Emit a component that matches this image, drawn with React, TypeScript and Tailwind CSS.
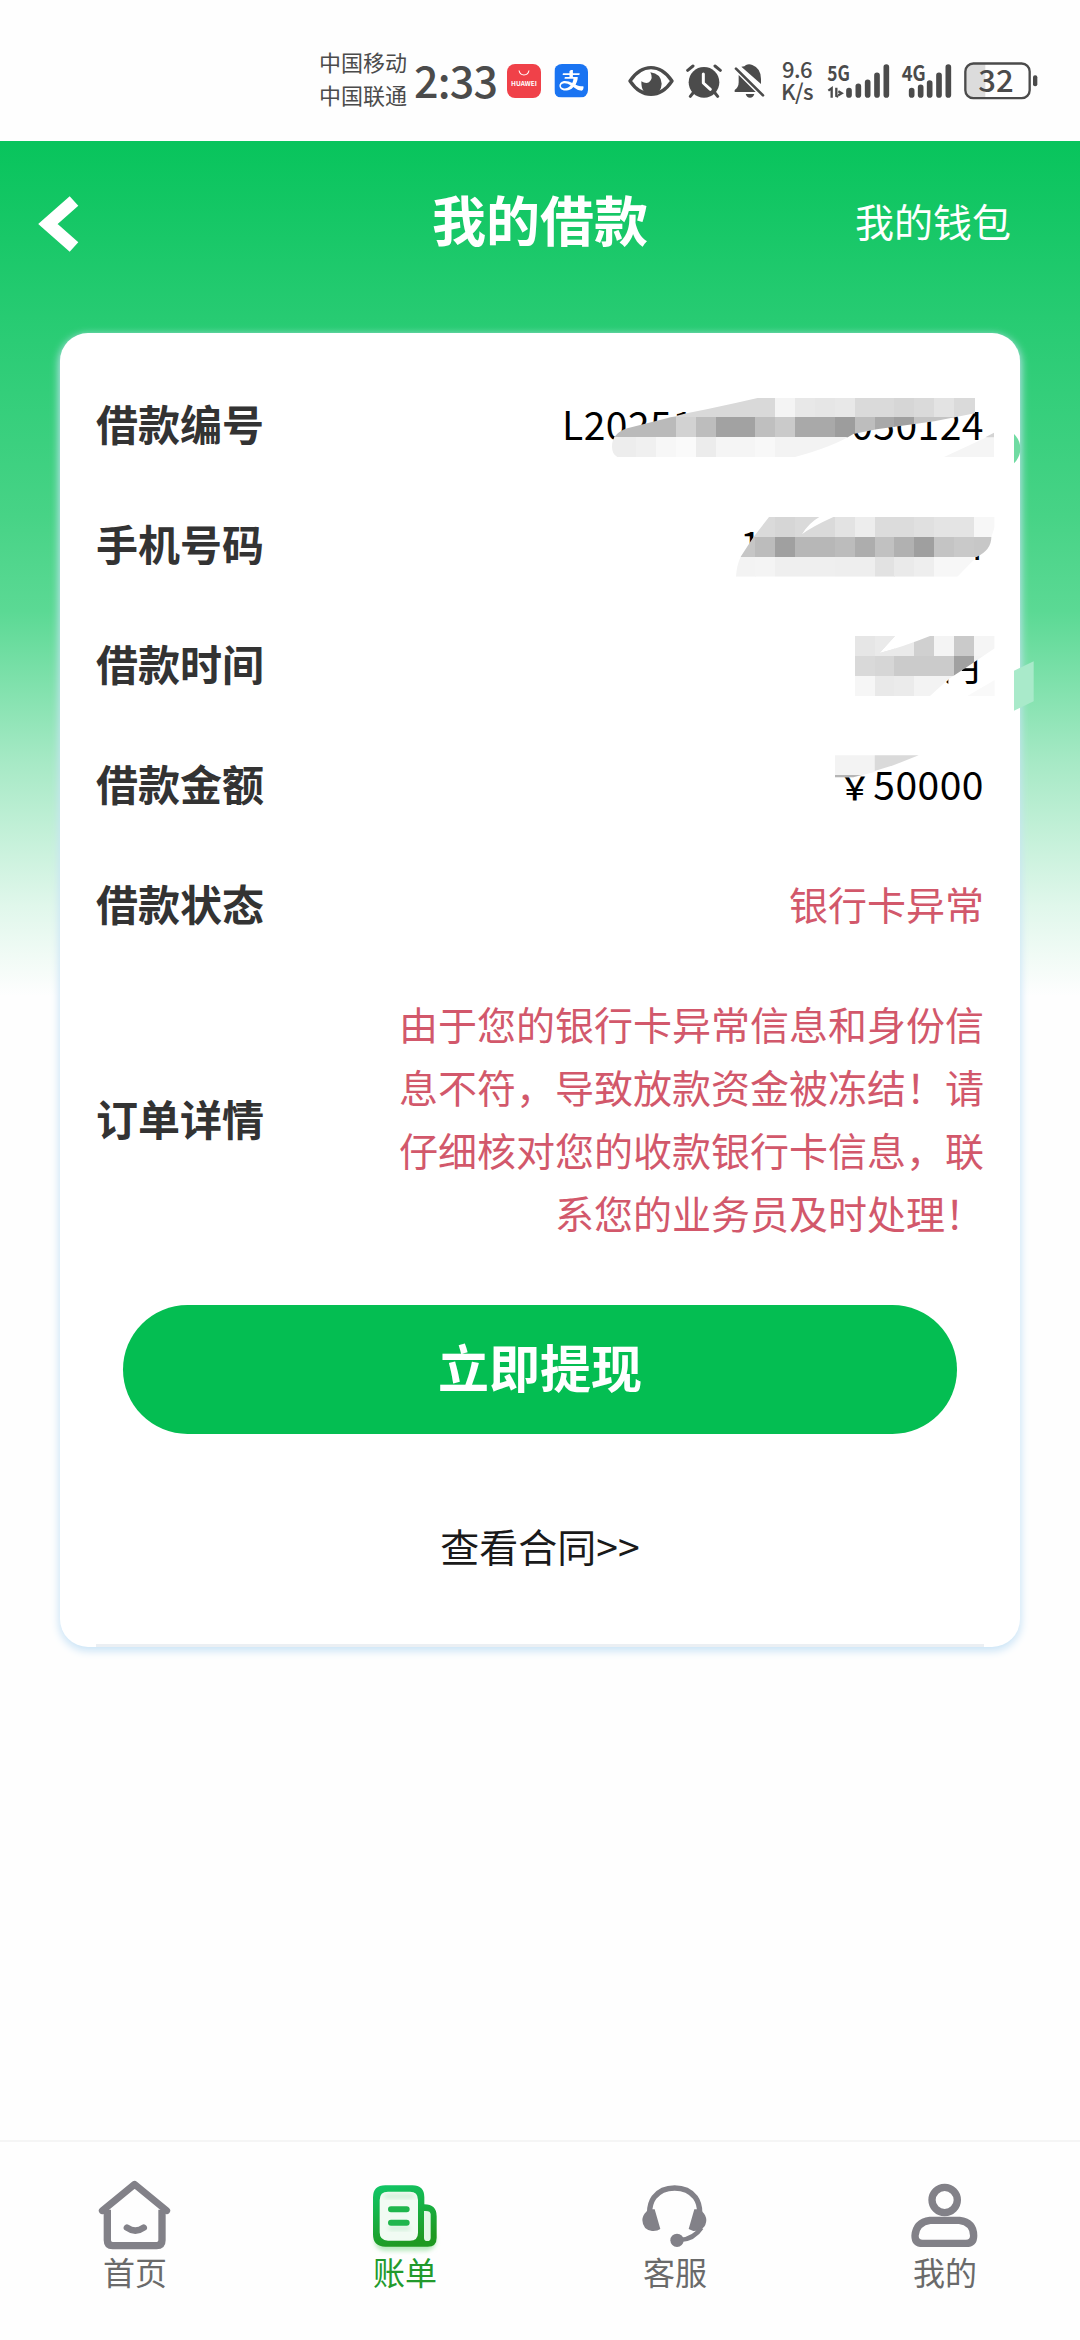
import type { ReactNode } from 'react'
import { AiFillAlipaySquare } from 'react-icons/ai'

type Tab = {
  label: string
  icon: ReactNode
  active?: boolean
}

const INK = '#4b4b4b'
const GREY = '#828188'

// x, y, width, height, fill
type Block = [number, number, number, number, string]

function Blocks({ items }: { items: Block[] }) {
  return (
    <>
      {items.map(([x, y, w, h, fill], i) => (
        <rect key={i} x={x} y={y} width={w} height={h} fill={fill} />
      ))}
    </>
  )
}

const orderBlocks: Block[] = [
  [210, 203, 496, 60, '#d9d9d9'],
  [705, 203, 60, 60, '#f4f4f4'],
  [765, 203, 181, 60, '#e8e8e8'],
  [825, 203, 60, 60, '#e6e6e6'],
  [945, 203, 120, 60, '#dadada'],
  [1063, 203, 60, 60, '#d6d6d6'],
  [1122, 203, 61, 60, '#dadada'],
  [1183, 203, 60, 60, '#e3e3e3'],
  [1243, 203, 62, 60, '#dadada'],
  [210, 262, 198, 61, '#bababa'],
  [408, 262, 60, 61, '#d2d2d2'],
  [467, 262, 60, 61, '#bdbdbd'],
  [527, 262, 120, 61, '#a2a2a2'],
  [646, 262, 60, 61, '#bfbfbf'],
  [705, 262, 60, 61, '#cacaca'],
  [765, 262, 120, 61, '#a9a9a9'],
  [885, 262, 60, 61, '#9d9d9d'],
  [945, 262, 60, 61, '#bdbdbd'],
  [1004, 262, 60, 61, '#a9a9a9'],
  [1063, 262, 60, 61, '#a0a0a0'],
  [1122, 262, 183, 61, '#c4c4c4'],
  [210, 322, 80, 60, '#ededed'],
  [289, 322, 60, 60, '#f0f0f0'],
  [348, 322, 60, 60, '#f7f7f7'],
  [408, 322, 60, 60, '#fafafa'],
  [467, 322, 60, 60, '#ececec'],
  [527, 322, 120, 60, '#f5f5f5'],
  [646, 322, 60, 60, '#f8f8f8'],
  [705, 322, 240, 60, '#f3f3f3'],
]

const phoneBlocks: Block[] = [
  [580, 561, 126, 60, '#dadada'],
  [705, 561, 60, 60, '#d6d6d6'],
  [765, 561, 60, 60, '#dadada'],
  [825, 561, 60, 60, '#dadada'],
  [885, 561, 60, 60, '#e3e3e3'],
  [945, 561, 60, 60, '#ededed'],
  [1004, 561, 119, 60, '#dcdcdc'],
  [1122, 561, 61, 60, '#e0e0e0'],
  [1183, 561, 120, 60, '#e4e4e4'],
  [1302, 561, 62, 60, '#f7f7f7'],
  [580, 620, 67, 61, '#c6c6c6'],
  [646, 620, 60, 61, '#bcbcbc'],
  [705, 620, 61, 61, '#a0a0a0'],
  [765, 620, 120, 61, '#b7b7b7'],
  [885, 620, 60, 61, '#bcbcbc'],
  [945, 620, 60, 61, '#adadad'],
  [1004, 620, 60, 61, '#c1c1c1'],
  [1063, 620, 60, 61, '#b1b1b1'],
  [1122, 620, 61, 61, '#9f9f9f'],
  [1183, 620, 60, 61, '#c4c4c4'],
  [1243, 620, 60, 61, '#c9c9c9'],
  [1302, 620, 62, 61, '#c7c7c7'],
  [580, 680, 67, 60, '#f3f3f3'],
  [646, 680, 60, 60, '#f4f4f4'],
  [705, 680, 180, 60, '#efefef'],
  [885, 680, 120, 60, '#eeeeee'],
  [1004, 680, 60, 60, '#e2e2e2'],
  [1063, 680, 60, 60, '#eaeaea'],
  [1122, 680, 61, 60, '#eeeeee'],
  [1183, 680, 120, 60, '#f7f7f7'],
]

const termBlocks: Block[] = [
  [945, 918, 120, 60, '#e6e6e6'],
  [1004, 918, 120, 60, '#eaeaea'],
  [1122, 918, 61, 60, '#d0d0d0'],
  [1183, 918, 60, 60, '#f4f4f4'],
  [1243, 918, 60, 60, '#cacaca'],
  [1302, 918, 62, 60, '#f5f5f5'],
  [945, 977, 60, 61, '#d9d9d9'],
  [1004, 977, 60, 61, '#d6d6d6'],
  [1063, 977, 180, 61, '#cbcbcb'],
  [1243, 977, 60, 61, '#a1a1a1'],
  [1302, 977, 62, 61, '#f3f3f3'],
  [945, 1037, 60, 61, '#f6f6f6'],
  [1004, 1037, 60, 61, '#e9e9e9'],
  [1063, 1037, 60, 61, '#ebebeb'],
  [1122, 1037, 121, 61, '#f3f3f3'],
]

/* Hand-brushed mosaic that hides the private values */
function Mosaic() {
  return (
    <svg
      className="pointer-events-none absolute left-[540px] top-[189px]"
      width="520"
      height="510"
      viewBox="0 0 1560 1530"
    >
      <defs>
        <clipPath id="order">
          <path d="M216 350C216 322 232 305 262 295L440 250L500 238L590 218L656 203H1305V250L1183 274L1010 298L940 312Q880 350 765 381H232Q216 372 216 350Z" />
        </clipPath>
        <clipPath id="phone">
          <path d="M687 561H838Q805 580 786 613Q812 592 880 561H1364V590L1354 622Q1354 660 1310 681L1252 740H588Q590 705 603 679L640 622Z" />
        </clipPath>
        <clipPath id="term">
          <path d="M945 918H1065L1019 969Q1090 950 1170 918H1364V955L1300 998L1225 1048L1170 1098H945Z" />
        </clipPath>
      </defs>
      {/* white strokes of the brush, under the grey blocks */}
      <path d="M1170 1098L1225 1062V1010L1266 1014L1262 1062L1225 1098Z" fill="#fff" />
      <g shapeRendering="crispEdges">
        <g clipPath="url(#order)">
          <Blocks items={orderBlocks} />
        </g>
        <g clipPath="url(#phone)">
          <Blocks items={phoneBlocks} />
        </g>
        <g clipPath="url(#term)">
          <Blocks items={termBlocks} />
        </g>
      </g>
      <path d="M1212 381L1340 322H1362V381Z" fill="#f5f5f5" />
      <path d="M1336 322L1362 308V322Z" fill="#d4d4d4" />
      <path d="M1282 1098L1364 1050V1098Z" fill="#f9f9f9" />
      <path d="M885 1276H1004V1326L940 1342H885Z" fill="#f3f3f3" />
      <path d="M885 1335H965L940 1342H885Z" fill="#b5b5b5" />
      <path d="M1004 1276H1136L1060 1306L1004 1323Z" fill="#dadada" />
      <path d="M1422 312Q1441 330 1441 356Q1441 380 1422 400Z" fill="#70dba2" />
      <path d="M1422 1022L1481 994V1114L1422 1142Z" fill="#a9eaca" />
    </svg>
  )
}

function StatusBar() {
  return (
    <div className="flex h-[141px] items-center pt-[20px] text-[#4b4b4b]">
      <div className="ml-[319px] w-[88px] pb-[5px] text-[22px] leading-[33px] whitespace-nowrap">
        <div>中国移动</div>
        <div>中国联通</div>
      </div>
      <div className="ml-[7px] w-[86px] pb-[3px] text-[43px] leading-[44px] font-medium tracking-[-0.8px] whitespace-nowrap">
        2:33
      </div>
      <div className="ml-[7px] flex h-[34px] w-[34px] flex-col items-center rounded-[8px] bg-[#f04149]">
        <svg className="mt-[6px]" width="12" height="6" viewBox="0 0 12 6">
          <path d="M1 0.5Q2 5 6 5T11 0.5" fill="none" stroke="#fff" strokeWidth="1.1" />
        </svg>
        <span className="mt-[3px] text-[6.5px] leading-[8px] font-bold text-white">HUAWEI</span>
      </div>
      <div className="ml-[13px] flex h-[34px] w-[34px] items-center justify-center overflow-hidden rounded-[8px] bg-white">
        <AiFillAlipaySquare className="shrink-0 text-[#1a74f2]" size={43} />
      </div>

      {/* Eye comfort */}
      <svg className="ml-[40px]" width="46" height="34" viewBox="51 100 138 102">
        <path d="M57 151Q84 111 120 111T183 151Q156 191 120 191T57 151Z" fill="none" stroke={INK} strokeWidth="10" strokeLinejoin="round" />
        <path d="M118 125Q128 144 114 155Q104 160 91 152Q90 192 121 193Q151 190 152 159Q150 129 118 125Z" fill={INK} />
      </svg>
      {/* Alarm */}
      <svg className="ml-[12px]" width="36" height="34" viewBox="225 100 108 102">
        <circle cx="279" cy="155" r="46" fill={INK} />
        <path d="M230 119L246 106M312 106L328 119M246 187L238 197M312 187L320 197" stroke={INK} strokeWidth="9" strokeLinecap="round" />
        <path d="M277 130V157L298 176" fill="none" stroke="#fff" strokeWidth="9" strokeLinecap="round" strokeLinejoin="round" />
      </svg>
      {/* Muted bell */}
      <svg className="ml-[12px]" width="31" height="34" viewBox="369 100 93 102">
        <path d="M391 108Q402 108 405 103Q414 99 424 103Q450 113 450 145V160ZM383 133L434 184H371V178Q383 170 383 155Z" fill={INK} />
        <path d="M375 114L456 194" stroke={INK} strokeWidth="8" strokeLinecap="round" />
        <path d="M404 190H430Q427 201 417 201T404 190Z" fill={INK} />
      </svg>

      <div className="ml-[15px] w-[34px] pb-[3px] text-center text-[22px] leading-[22px] font-medium tracking-[-0.5px] whitespace-nowrap">
        <div>9.6</div>
        <div>K/s</div>
      </div>

      {/* 5G */}
      <svg className="ml-[13px] overflow-visible" width="63" height="36" viewBox="650 97 189 108">
        <text x="651" y="150" fontSize="63" fontWeight="700" textLength="68" lengthAdjust="spacingAndGlyphs" fill={INK}>5G</text>
        <path d="M716 180V193M744 167V193M772 155V193M800 134V193M828 109V193" stroke={INK} strokeWidth="17" strokeLinecap="round" />
        <path d="M654 180L664 173V201M678 171V196L684 198M684 182L694 188L684 194" fill="none" stroke={INK} strokeWidth="7" />
      </svg>
      {/* 4G */}
      <svg className="ml-[11px] overflow-visible" width="51" height="36" viewBox="872 97 153 108">
        <text x="874" y="150" fontSize="63" fontWeight="700" textLength="72" lengthAdjust="spacingAndGlyphs" fill={INK}>4G</text>
        <path d="M904 180V193M931 170V193M958 157V193M986 134V193M1014 109V193" stroke={INK} strokeWidth="17" strokeLinecap="round" />
      </svg>
      {/* Battery */}
      <svg className="ml-[12px] overflow-visible" width="74" height="38" viewBox="1058 95 222 114">
        <path d="M1122 99H1084Q1062 99 1062 121V182Q1062 203 1084 203H1122Z" fill="#dcdcdc" />
        <rect x="1062" y="99.500" width="193" height="104" rx="24" fill="none" stroke={INK} strokeWidth="7" />
        <rect x="1265" y="135" width="13" height="33" rx="6" fill={INK} />
        <text x="1154" y="186" fontSize="93" fontWeight="500" textAnchor="middle" fill={INK}>32</text>
      </svg>
    </div>
  )
}

function Row({ label, children }: { label: string; children: ReactNode }) {
  return (
    <div className="flex items-center justify-between py-[29px]">
      <div className="text-[42px] leading-[62px] font-bold text-[#333]">{label}</div>
      {children}
    </div>
  )
}

const tabs: Tab[] = [
  {
    label: '首页',
    icon: (
      <svg width="80" height="80" viewBox="105 80 240 240">
        <path d="M127 181L224 102L320 181" fill="none" stroke={GREY} strokeWidth="21" strokeLinecap="round" strokeLinejoin="round" />
        <path d="M142 178V270Q142 286 158 286H290Q306 286 306 270V178" fill="none" stroke={GREY} strokeWidth="22" />
        <path d="M201 232Q226 250 251 232" fill="none" stroke={GREY} strokeWidth="20" strokeLinecap="round" />
      </svg>
    ),
  },
  {
    label: '账单',
    active: true,
    icon: (
      <svg width="80" height="80" viewBox="915 80 240 240">
        <defs>
          <linearGradient id="bill" x1="0" y1="0" x2="0.3" y2="1">
            <stop offset="0" stopColor="#10c768" />
            <stop offset="1" stopColor="#1f9a22" />
          </linearGradient>
          <filter id="glow" x="-20%" y="-40%" width="140%" height="180%">
            <feGaussianBlur stdDeviation="6" />
          </filter>
        </defs>
        <rect x="944" y="240" width="184" height="62" rx="30" fill="#b9e9bf" filter="url(#glow)" />
        <rect x="950" y="116" width="134" height="162" rx="28" fill="#f1fbf3" />
        <rect x="972" y="132" width="92" height="12" rx="6" fill="#cdeed6" filter="url(#glow)" />
        <rect x="985" y="228" width="66" height="12" rx="6" fill="#cdeed6" filter="url(#glow)" />
        <rect x="1088" y="172" width="30" height="106" rx="12" fill="#e3f7e6" />
        <path
          d="M976 105H1057Q1093 105 1093 141V162Q1130 162 1130 198V262Q1130 289 1103 289H976Q939 289 939 252V141Q939 105 976 105ZM984 124Q959 124 959 149V246Q959 271 984 271H1050Q1074 271 1074 247V149Q1074 124 1050 124ZM1092 182V262Q1092 272 1102 272T1112 262V192Q1112 180 1092 182Z"
          fill="url(#bill)"
          fillRule="evenodd"
        />
        <path d="M993 177H1040M993 217H1040" stroke="#1fb64d" strokeWidth="18" strokeLinecap="round" />
      </svg>
    ),
  },
  {
    label: '客服',
    icon: (
      <svg width="80" height="80" viewBox="105 80 240 240">
        <path d="M149 186Q149 159 162 141Q184 113 224 113T286 141Q299 159 299 186" fill="none" stroke={GREY} strokeWidth="16" />
        <path d="M139 184L144 177H164L181 236Q172 243 156 242Q128 238 127 209Q128 194 139 184ZM307 184L303 177H283L266 236L280 242Q318 240 319 209Q318 194 307 184Z" fill={GREY} />
        <path d="M304 232Q282 266 240 269" fill="none" stroke={GREY} strokeWidth="14" />
        <circle cx="231" cy="270" r="20" fill={GREY} />
      </svg>
    ),
  },
  {
    label: '我的',
    icon: (
      <svg width="80" height="80" viewBox="915 80 240 240">
        <circle cx="1034" cy="149" r="38" fill="none" stroke={GREY} strokeWidth="22" />
        <path d="M990 210H1078Q1121 216 1121 256Q1121 279 1098 279H968Q945 279 945 256Q948 216 990 210Z" fill="none" stroke={GREY} strokeWidth="22" />
      </svg>
    ),
  },
]

export default function App() {
  return (
    <div className="flex h-[2340px] w-[1080px] flex-col overflow-hidden bg-[#fefefe] font-['Noto_Sans_CJK_SC',sans-serif]">
      <StatusBar />

      <main className="relative flex-1 bg-[linear-gradient(180deg,#08c45c_0px,#2bcc75_200px,#47d386_375px,#5bd994_470px,#a6e9c5_620px,#e0f7eb_765px,#fefefe_855px)]">
        <header className="grid h-[192px] grid-cols-3 items-center pb-[28px] text-white">
          <svg className="ml-[37px]" width="46" height="60" viewBox="0 0 46 60">
            <path d="M37 8L11 31L37 54" fill="none" stroke="#fff" strokeWidth="13" />
          </svg>
          <h1 className="pb-[8px] text-center text-[54px] leading-[60px] font-bold">我的借款</h1>
          <span className="mr-[69px] pb-[7px] text-right text-[39px] leading-[50px]">我的钱包</span>
        </header>

        <section className="mx-[60px] flex h-[1314px] flex-col rounded-[28px] bg-white px-[36px] pt-[30px] shadow-[0_3px_9px_1px_#c9e3f6]">
          <div className="text-[39px] leading-[62px]">
            <Row label="借款编号">
              <div className="flex w-[422px] justify-between tracking-[0.5px]">
                <span>L20251</span>
                <span>050124</span>
              </div>
            </Row>
            <Row label="手机号码">
              <div className="flex w-[244px] justify-between">
                <span>1</span>
                <span>4</span>
              </div>
            </Row>
            <Row label="借款时间">
              <span>月</span>
            </Row>
            <Row label="借款金额">
              <span className="flex h-[62px] items-baseline tracking-[0.5px]">
                <span className="mr-[2px] text-[32px] leading-[32px] font-medium">￥</span>50000
              </span>
            </Row>
            <Row label="借款状态">
              <span className="text-[#d2586b]">银行卡异常</span>
            </Row>
            <Row label="订单详情">
              <p className="w-[590px] text-right leading-[63px] text-[#d2586b]">
                由于您的银行卡异常信息和身份信息不符，导致放款资金被冻结！请仔细核对您的收款银行卡信息，联系您的业务员及时处理！
              </p>
            </Row>
          </div>

          <button className="mx-[27px] mt-[32px] h-[129px] shrink-0 rounded-full bg-[#04be52] pb-[7px] text-[51px] font-bold text-white">
            立即提现
          </button>
          <a className="mt-[80px] text-center text-[39px] leading-[63px] text-[#1a1a1a]">查看合同&gt;&gt;</a>
          <div className="mt-auto h-[3px] bg-[#ebeff3]" />
        </section>

        <Mosaic />
      </main>

      <nav className="grid h-[200px] shrink-0 grid-cols-4 border-t-2 border-[#f5f5f5] pt-[35px]">
        {tabs.map((tab) => (
          <div key={tab.label} className="flex flex-col items-center">
            {tab.icon}
            <span className={tab.active ? '-mt-[2px] text-[32px] leading-[32px] text-[#229a2c]' : '-mt-[2px] text-[32px] leading-[32px] text-[#6a6a6a]'}>
              {tab.label}
            </span>
          </div>
        ))}
      </nav>
    </div>
  )
}
